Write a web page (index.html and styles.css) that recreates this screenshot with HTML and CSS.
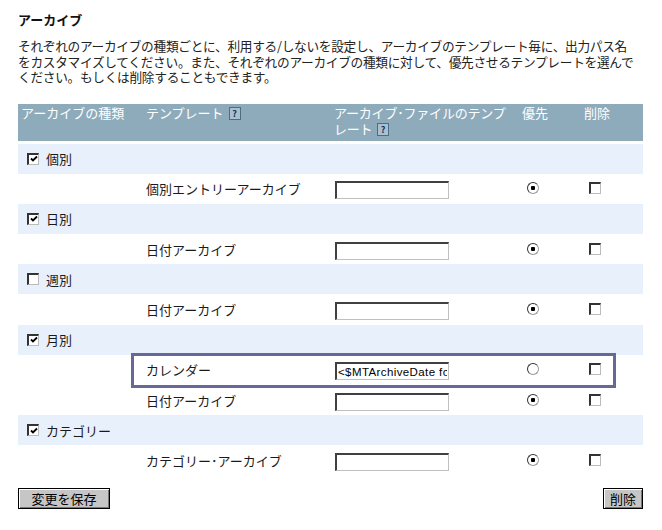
FILE: index.html
```html
<!doctype html>
<html lang="ja">
  <head>
    <meta charset="utf-8">
    <title>アーカイブ設定</title>
    <link rel="stylesheet" href="styles.css">
  </head>
  <body>
    <section class="archives">
      <h2 class="archives__title">アーカイブ</h2>
      <p class="archives__intro">
        それぞれのアーカイブの種類ごとに、利用する/しないを設定し、アーカイブのテンプレート毎に、出力パス名<br>をカスタマイズしてください。また、それぞれのアーカイブの種類に対して、優先させるテンプレートを選んで<br>ください。もしくは削除することもできます。
      </p>

      <div class="table_wrap">
        <table class="archive_table">
          <colgroup>
            <col class="col_type">
            <col class="col_tmpl">
            <col class="col_file">
            <col class="col_pref">
            <col class="col_del">
          </colgroup>
          <thead>
            <tr>
              <th>アーカイブの種類</th>
              <th>テンプレート <span class="help">?</span></th>
              <th class="th_file">アーカイブ･ファイルのテンプ<br>レート <span class="help">?</span></th>
              <th>優先</th>
              <th>削除</th>
            </tr>
          </thead>
          <tbody>
            <tr class="type_row">
              <td colspan="5"><label><input type="checkbox" checked> 個別</label></td>
            </tr>
            <tr class="tmpl_row">
              <td></td>
              <td>個別エントリーアーカイブ</td>
              <td><input class="path" type="text"></td>
              <td class="mark"><input type="radio" name="pref_individual" checked></td>
              <td class="mark"><input type="checkbox"></td>
            </tr>

            <tr class="type_row">
              <td colspan="5"><label><input type="checkbox" checked> 日別</label></td>
            </tr>
            <tr class="tmpl_row">
              <td></td>
              <td>日付アーカイブ</td>
              <td><input class="path" type="text"></td>
              <td class="mark"><input type="radio" name="pref_daily" checked></td>
              <td class="mark"><input type="checkbox"></td>
            </tr>

            <tr class="type_row">
              <td colspan="5"><label><input type="checkbox"> 週別</label></td>
            </tr>
            <tr class="tmpl_row">
              <td></td>
              <td>日付アーカイブ</td>
              <td><input class="path" type="text"></td>
              <td class="mark"><input type="radio" name="pref_weekly" checked></td>
              <td class="mark"><input type="checkbox"></td>
            </tr>

            <tr class="type_row">
              <td colspan="5"><label><input type="checkbox" checked> 月別</label></td>
            </tr>
            <tr class="tmpl_row">
              <td></td>
              <td>カレンダー</td>
              <td><input class="path" type="text" value="&lt;$MTArchiveDate format=&quot;%Y/%m&quot;$&gt;"></td>
              <td class="mark"><input type="radio" name="pref_monthly"></td>
              <td class="mark"><input type="checkbox"></td>
            </tr>
            <tr class="tmpl_row">
              <td></td>
              <td>日付アーカイブ</td>
              <td><input class="path" type="text"></td>
              <td class="mark"><input type="radio" name="pref_monthly" checked></td>
              <td class="mark"><input type="checkbox"></td>
            </tr>

            <tr class="type_row">
              <td colspan="5"><label><input type="checkbox" checked> カテゴリー</label></td>
            </tr>
            <tr class="tmpl_row">
              <td></td>
              <td>カテゴリー･アーカイブ</td>
              <td><input class="path" type="text"></td>
              <td class="mark"><input type="radio" name="pref_category" checked></td>
              <td class="mark"><input type="checkbox"></td>
            </tr>
          </tbody>
        </table>
        <!-- highlight around the calendar template -->
        <div class="highlight"></div>
      </div>

      <div class="actions">
        <button class="btn btn--save">変更を保存</button>
        <button class="btn">削除</button>
      </div>
    </section>
  </body>
</html>
```

FILE: styles.css
```css
body{
  margin: 0;
  font-family: "Noto Sans CJK JP", "DejaVu Sans", sans-serif;
  font-size: 13px;
  color: #1a1a1a;
  background: #fff;
}
.archives{
  padding: 11px 18px 0 18px;
}
.archives__title{
  font-size: 13px;
  font-weight: bold;
  line-height: 17px;
  margin: 0 0 10px 0;
  color: #111;
}
.archives__intro{
  margin: 0 0 19px 0;
  font-size: 12.7px;
  line-height: 15.5px;
  color: #222;
  white-space: nowrap;
  letter-spacing: -0.3px;
}
/*--------------------------*/
.table_wrap{
  position: relative;
  width: 625px;
}
.archive_table{
  width: 625px;
  border-collapse: separate;
  border-spacing: 0;
  table-layout: fixed;
}
.col_type{ width: 125px; }
.col_tmpl{ width: 188px; }
.col_file{ width: 188px; }
.col_pref{ width: 62px; }
.col_del{ width: 62px; }

.archive_table th{
  background: #8eabbc;
  color: #fff;
  font-weight: normal;
  text-align: left;
  vertical-align: top;
  padding: 1px 3px 0 3px;
  line-height: 16px;
  border-bottom: 3px solid #fff;
  box-sizing: border-box;
  height: 40px;
}
.th_file{
  letter-spacing: -0.2px;
}
.help{
  display: inline-block;
  box-sizing: border-box;
  width: 12px;
  height: 13px;
  line-height: 11px;
  border: 1px solid #4d6d84;
  background: #a9c1ce;
  color: #1b2f5c;
  font-size: 9px;
  font-weight: bold;
  text-align: center;
  vertical-align: middle;
  margin-left: 2px;
  letter-spacing: 0;
}
.archive_table td{
  padding: 0 3px;
  height: 30.2px;
  vertical-align: middle;
  box-sizing: border-box;
}
.type_row td{
  background: #e8f0fb;
}
.type_row label{
  display: flex;
  align-items: center;
  gap: 7px;
  padding-left: 6px;
}
.tmpl_row td{
  background: #fff;
}
.tmpl_row td.mark{
  padding-left: 8px;
}
/*--------------------------*/
.path{
  box-sizing: border-box;
  width: 114px;
  height: 18px;
  margin: 3px 0 0 1px;
  padding: 0 1px;
  border: 1px solid;
  border-color: #404040 #c0c0c0 #c0c0c0 #404040;
  border-top-width: 2px;
  border-left-width: 2px;
  font-family: "Liberation Sans", Arial, sans-serif;
  font-size: 11.5px;
  letter-spacing: 0.4px;
  color: #000;
  background: #fff;
  outline: none;
}
input[type=checkbox]{
  -webkit-appearance: none;
  appearance: none;
  box-sizing: border-box;
  width: 12px;
  height: 12px;
  margin: 3px 0 0 0;
  border: 1px solid;
  border-color: #333 #bbb #bbb #333;
  border-top-width: 2px;
  border-left-width: 2px;
  background: #fff;
}
input[type=checkbox]:checked{
  background: #fff url("data:image/svg+xml,%3Csvg xmlns='http://www.w3.org/2000/svg' width='8' height='8'%3E%3Cpath d='M1 3.5 L3 5.5 L7 1.5' stroke='%23000' stroke-width='1.8' fill='none'/%3E%3C/svg%3E") center/8px 8px no-repeat;
}
.type_row input[type=checkbox]{
  margin: 0;
}
input[type=radio]{
  -webkit-appearance: none;
  appearance: none;
  box-sizing: border-box;
  width: 12px;
  height: 12px;
  margin: 3px 0 0 0;
  border-radius: 50%;
  border: 1px solid;
  border-color: #333 #999 #999 #333;
  background: #fff;
}
input[type=radio]:checked{
  background: radial-gradient(circle, #000 0 2px, #fff 2.5px);
}
/*--------------------------*/
.highlight{
  position: absolute;
  left: 113px;
  top: 249px;
  width: 485px;
  height: 35px;
  box-sizing: border-box;
  border: 3px solid #676799;
  pointer-events: none;
}
/*--------------------------*/
.actions{
  display: flex;
  justify-content: space-between;
  width: 625px;
  margin-top: 12px;
}
.btn{
  font-family: "Noto Sans CJK JP", sans-serif;
  font-size: 13px;
  line-height: 15px;
  height: 21px;
  padding: 0 6px;
  color: #000;
  background: #c6c6c6;
  border: 1px solid #000;
  box-shadow: inset 1px 1px 0 #fff, inset -1px -1px 0 #777;
}
.btn--save{
  width: 92px;
  padding: 0 12px;
}
```
